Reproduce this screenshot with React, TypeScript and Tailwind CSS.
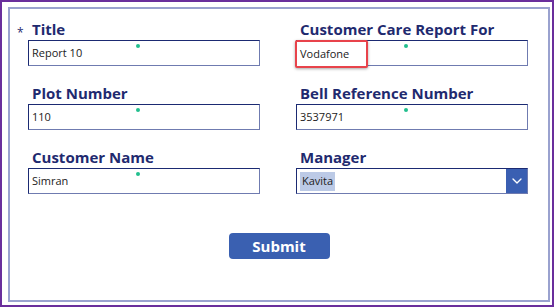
import { ChevronDown } from "lucide-react";

const label = "h-[22px] flex items-center pl-1 text-[15px] font-bold text-[#1f2a6f] leading-none";
const input =
  "relative h-[26px] flex items-center px-[3px] border border-[#1b2a72] border-b-[#6f7bb0] border-r-[#6f7bb0] bg-white text-[11px] text-[#222]";

function Dot() {
  return <span className="absolute left-[107px] top-[3px] w-[4px] h-[4px] rounded-full bg-[#22bf8e]"></span>;
}

function Field({ title, value, star }: { title: string; value: string; star?: boolean }) {
  return (
    <div className="flex flex-col">
      <div className={`${label} relative`}>
        {star && <span className="absolute -left-[11px] top-[9px] text-[12px] font-normal text-[#1f2a6f]">*</span>}
        {title}
      </div>
      <div className={input}>
        <Dot />
        {value}
      </div>
    </div>
  );
}

export default function App() {
  return (
    <div className="w-[556px] h-[307px] bg-white" style={{ fontFamily: "'Open Sans', sans-serif" }}>
      <div className="w-[554px] h-[307px] border-2 border-[#6a2e9c] bg-white">
        <div className="ml-[6px] mt-[5px] w-[542px] h-[295px] border-2 border-[#9aa2cf] pt-[9px] pl-[18px]">
          <div className="grid grid-cols-[232px_232px] gap-x-[36px] gap-y-[16px]">
            <Field title="Title" value="Report 10" star />
            <div className="flex flex-col">
              <div className={label}>Customer Care Report For</div>
              <div className={input}>
                <Dot />
                <span className="absolute -left-[2px] -top-[1px] w-[73px] h-[28px] border-2 border-[#e8434b] rounded-[2px] shadow-[0_1px_3px_rgba(0,0,0,0.35)] flex items-center pl-[3px] bg-white">
                  Vodafone
                </span>
              </div>
            </div>
            <Field title="Plot Number" value="110" />
            <Field title="Bell Reference Number" value="3537971" />
            <Field title="Customer Name" value="Simran" />
            <div className="flex flex-col">
              <div className={label}>Manager</div>
              <div className={`${input} pr-0`}>
                <span className="bg-[#bccae6] px-[2px] h-[19px] flex items-center">Kavita</span>
                <span className="ml-auto h-full w-[21px] bg-[#3a5fb2] flex items-center justify-center">
                  <ChevronDown className="text-white" size={16} strokeWidth={2} />
                </span>
              </div>
            </div>
          </div>
          <div className="flex justify-center pr-[18px] mt-[39px]">
            <button className="w-[101px] h-[26px] rounded-[4px] bg-[#3a60b1] text-white text-[15px] font-bold leading-none">
              Submit
            </button>
          </div>
        </div>
      </div>
    </div>
  );
}
